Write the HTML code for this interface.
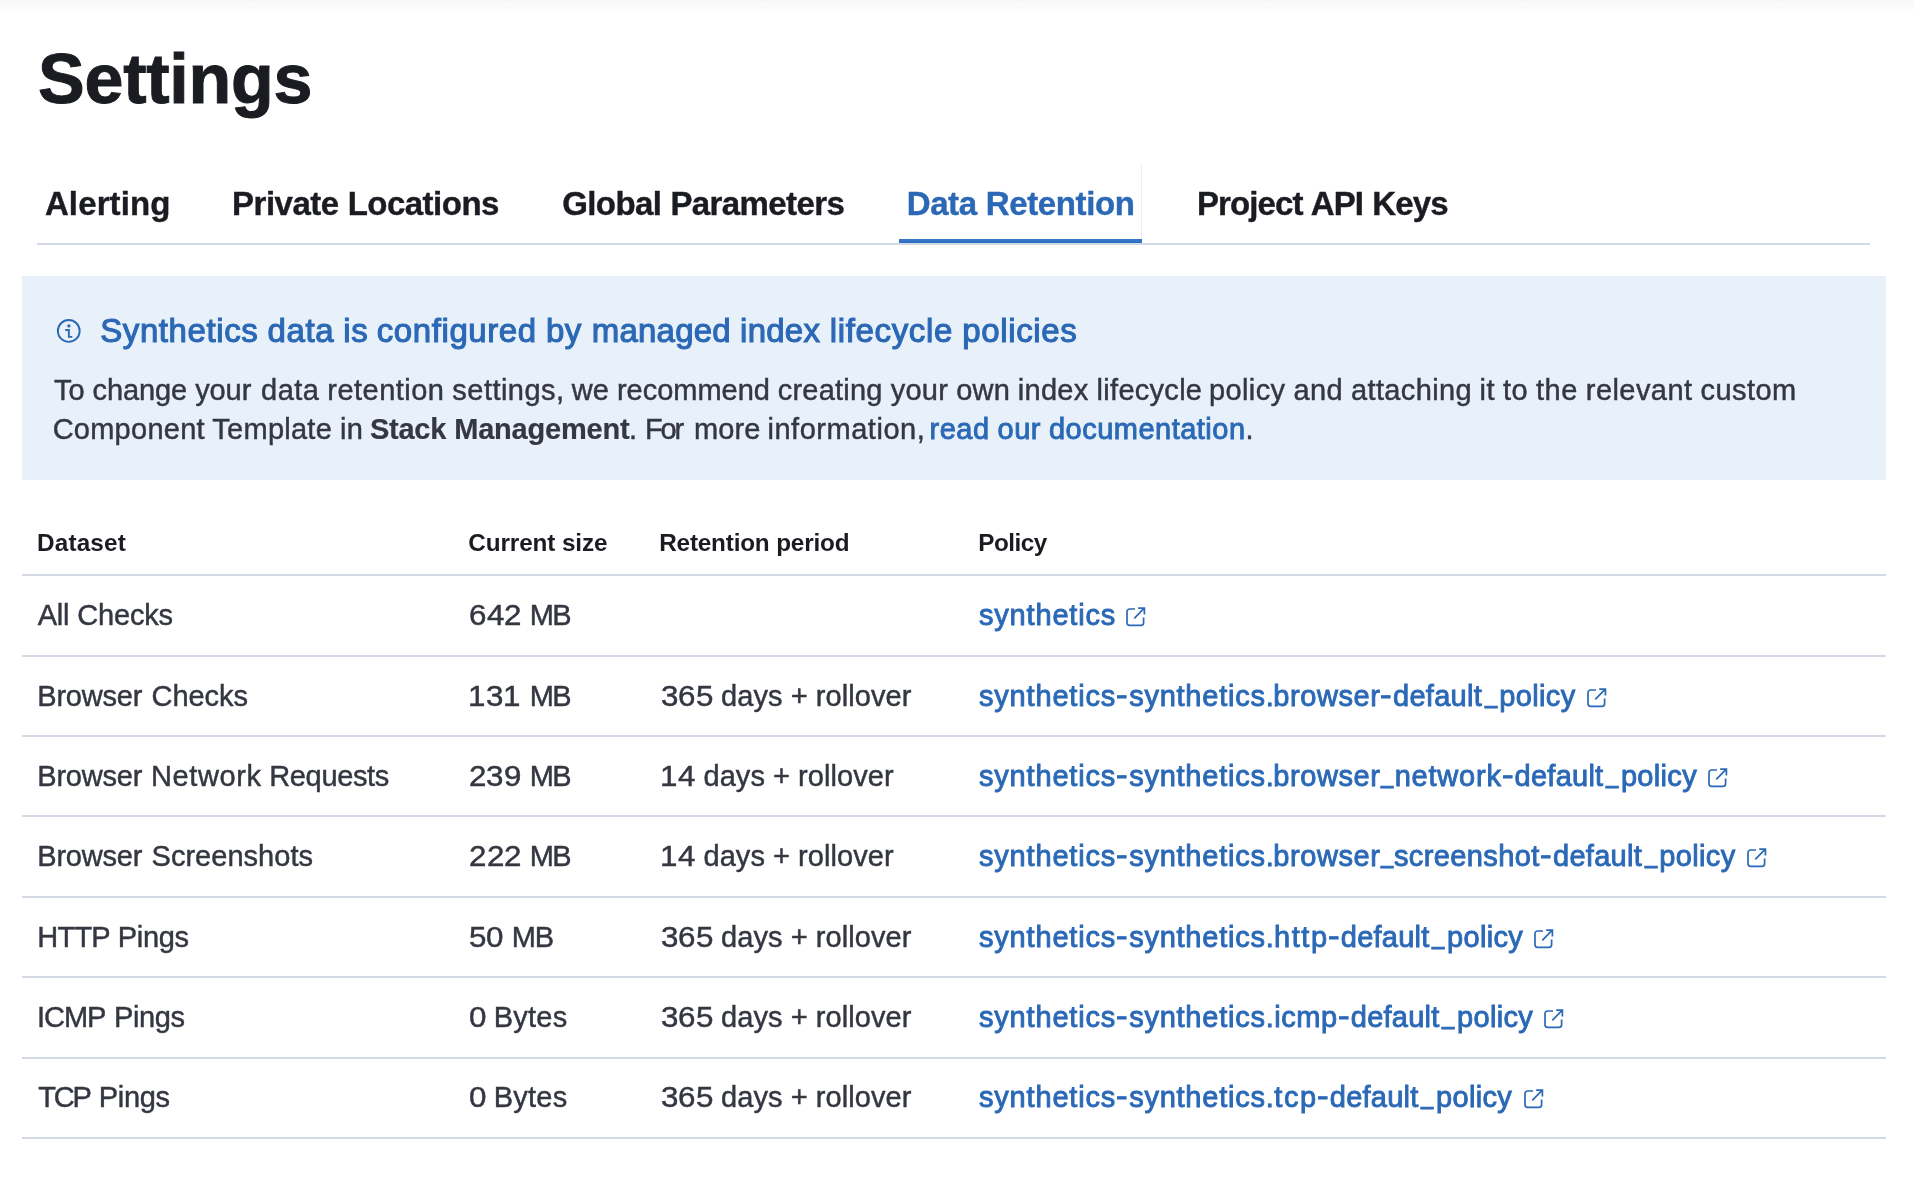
<!DOCTYPE html>
<html lang="en"><head><meta charset="utf-8"><title>Settings - Data Retention</title><style>
html,body{margin:0;padding:0;background:#fff;}
body{width:1914px;height:1178px;overflow:hidden;position:relative;font-family:"Liberation Sans",Arial,sans-serif;}
.p{position:absolute;left:0;top:0;width:1914px;height:1178px;overflow:hidden;will-change:transform;}
.t{position:absolute;display:block;white-space:pre;line-height:1;margin:0;padding:0;text-decoration:none;font-style:normal;}
.k{display:inline-block;position:relative;width:0;overflow:visible;white-space:pre;transform-origin:0 0;}
.b{position:absolute;}
svg{position:absolute;overflow:visible;}
</style></head><body><div class="p">
<div class="b" style="left:0;top:0;width:1914px;height:13px;background:linear-gradient(#f4f4f4 0,#f9f9f9 18%,#fbfbfb 55%,#fff 100%)"></div>
<div class="b" style="left:37px;top:243px;width:1833px;height:2px;background:#d3dae6"></div>
<div class="b" style="left:899px;top:239px;width:243px;height:4px;background:#3476c6"></div><div class="b" style="left:899px;top:242px;width:243px;height:1px;background:#266cc4"></div>
<div class="b" style="left:1141px;top:165px;width:1px;height:74px;background:#e8eff9"></div>
<div class="b" style="left:22px;top:276px;width:1864px;height:204px;background:#e8f0fa"></div>
<svg style="left:55px;top:317px" width="28" height="28" viewBox="0 0 28 28"><circle cx="13.75" cy="13.95" r="10.9" fill="none" stroke="#2b68b5" stroke-width="1.9"/><circle cx="13.9" cy="8.9" r="1.65" fill="#2b68b5"/><path d="M10.2 13.05H13.85V19.9H17.3" fill="none" stroke="#2b68b5" stroke-width="1.9"/></svg>
<div class="b" style="left:22px;top:574px;width:1864px;height:2px;background:#d3dae6"></div>
<div class="b" style="left:22px;top:655px;width:1864px;height:2px;background:#d3dae6"></div>
<div class="b" style="left:22px;top:735px;width:1864px;height:2px;background:#d3dae6"></div>
<div class="b" style="left:22px;top:815px;width:1864px;height:2px;background:#d3dae6"></div>
<div class="b" style="left:22px;top:896px;width:1864px;height:2px;background:#d3dae6"></div>
<div class="b" style="left:22px;top:976px;width:1864px;height:2px;background:#d3dae6"></div>
<div class="b" style="left:22px;top:1057px;width:1864px;height:2px;background:#d3dae6"></div>
<div class="b" style="left:22px;top:1137px;width:1864px;height:2px;background:#d3dae6"></div>
<h1 class="t" style="left:38.05px;top:44px;font-size:70px;font-weight:700;color:#1a1c21"><span class="k" style="letter-spacing:-0.252px;-webkit-text-stroke:1.0px #1a1c21;">Settings</span></h1>
<span class="t" style="left:44.93px;top:187px;font-size:33px;font-weight:700;color:#1a1c21"><span class="k" style="letter-spacing:0.121px;-webkit-text-stroke:0.4px #1a1c21;">Alerting</span></span>
<span class="t" style="left:232.10px;top:187px;font-size:33px;font-weight:700;color:#1a1c21"><span class="k" style="letter-spacing:-0.521px;word-spacing:0.521px;-webkit-text-stroke:0.4px #1a1c21;">Private Locations</span></span>
<span class="t" style="left:562.22px;top:187px;font-size:33px;font-weight:700;color:#1a1c21"><span class="k" style="letter-spacing:-0.605px;word-spacing:0.605px;-webkit-text-stroke:0.4px #1a1c21;">Global Parameters</span></span>
<span class="t" style="left:906.70px;top:187px;font-size:33px;font-weight:700;color:#2b68b5"><span class="k" style="letter-spacing:-0.393px;word-spacing:0.393px;-webkit-text-stroke:0.4px #2b68b5;">Data Retention</span></span>
<span class="t" style="left:1196.88px;top:187px;font-size:33px;font-weight:700;color:#1a1c21"><span class="k" style="letter-spacing:-0.861px;word-spacing:0.861px;-webkit-text-stroke:0.4px #1a1c21;">Project API Keys</span></span>
<p class="t" style="left:100.19px;top:314px;font-size:33px;font-weight:400;color:#2b68b5"><span class="k" style="letter-spacing:0.595px;word-spacing:-0.595px;-webkit-text-stroke:1.1px #2b68b5;">Synthetics data is </span><span class="k" style="left:276.60px;letter-spacing:0.586px;word-spacing:-0.586px;-webkit-text-stroke:1.1px #2b68b5;">configured by </span><span class="k" style="left:491.50px;letter-spacing:0.232px;word-spacing:-0.232px;-webkit-text-stroke:1.1px #2b68b5;">managed index </span><span class="k" style="left:729.55px;letter-spacing:0.653px;word-spacing:-0.653px;-webkit-text-stroke:1.1px #2b68b5;">lifecycle policies</span></p>
<p class="t" style="left:54.01px;top:376px;font-size:29px;font-weight:400;color:#343741"><span class="k" style="letter-spacing:-0.090px;word-spacing:0.090px;-webkit-text-stroke:0.45px #343741;">To change your </span><span class="k" style="left:207.05px;letter-spacing:0.455px;word-spacing:-0.455px;-webkit-text-stroke:0.45px #343741;">data retention settings, </span><span class="k" style="left:517.85px;letter-spacing:-0.010px;word-spacing:0.010px;-webkit-text-stroke:0.45px #343741;">we recommend </span><span class="k" style="left:723.65px;letter-spacing:0.236px;word-spacing:-0.236px;-webkit-text-stroke:0.45px #343741;">creating your own </span><span class="k" style="left:963.79px;letter-spacing:0.284px;word-spacing:-0.284px;-webkit-text-stroke:0.45px #343741;">index lifecycle </span><span class="k" style="left:1155.01px;letter-spacing:0.373px;word-spacing:-0.373px;-webkit-text-stroke:0.45px #343741;">policy and attaching </span><span class="k" style="left:1425.51px;letter-spacing:0.444px;word-spacing:-0.444px;-webkit-text-stroke:0.45px #343741;">it to the relevant custom</span></p>
<p class="t" style="left:52.65px;top:415px;font-size:29px;font-weight:400;color:#343741"><span class="k" style="letter-spacing:0.250px;word-spacing:-0.250px;-webkit-text-stroke:0.45px #343741;">Component Template in </span><b class="k" style="left:317.25px;font-weight:700;letter-spacing:-0.218px;word-spacing:0.218px;-webkit-text-stroke:0.2px #343741;">Stack Management</b><span class="k" style="left:576.34px;letter-spacing:0.000px;-webkit-text-stroke:0.45px #343741;">. </span><span class="k" style="left:592.43px;letter-spacing:-2.196px;-webkit-text-stroke:0.45px #343741;">For </span><span class="k" style="left:641.39px;letter-spacing:0.119px;-webkit-text-stroke:0.45px #343741;">more </span><span class="k" style="left:714.79px;letter-spacing:0.530px;-webkit-text-stroke:0.45px #343741;">information, </span><span class="k" style="left:876.91px;color:#2b69b6;letter-spacing:0.483px;word-spacing:-0.483px;-webkit-text-stroke:0.9px #2b69b6;">read our documentation</span><span class="k" style="left:1192.97px;letter-spacing:0.000px;-webkit-text-stroke:0.45px #343741;">.</span></p>
<div class="t" style="left:37.03px;top:531px;font-size:24.3px;font-weight:700;color:#1a1c21"><span class="k" style="letter-spacing:0.165px;">Dataset</span></div>
<div class="t" style="left:468.36px;top:531px;font-size:24.3px;font-weight:700;color:#1a1c21"><span class="k" style="letter-spacing:-0.128px;word-spacing:0.128px;">Current size</span></div>
<div class="t" style="left:659.23px;top:531px;font-size:24.3px;font-weight:700;color:#1a1c21"><span class="k" style="letter-spacing:-0.198px;word-spacing:0.198px;">Retention period</span></div>
<div class="t" style="left:978.21px;top:531px;font-size:24.3px;font-weight:700;color:#1a1c21"><span class="k" style="letter-spacing:-0.503px;">Policy</span></div>
<div class="t" style="left:37.69px;top:601px;font-size:29px;font-weight:400;color:#343741"><span class="k" style="letter-spacing:-0.204px;word-spacing:0.204px;-webkit-text-stroke:0.45px #343741;">All Checks</span></div>
<div class="t" style="left:469.18px;top:601px;font-size:29px;font-weight:400;color:#343741"><span class="k" style="left:-0.00px;letter-spacing:0.000px;transform:translateY(0px) scaleX(1.08);-webkit-text-stroke:0.45px #343741;">6</span><span class="k" style="left:17.50px;letter-spacing:0.000px;transform:translateY(0px) scaleX(1.08);-webkit-text-stroke:0.45px #343741;">4</span><span class="k" style="left:34.58px;letter-spacing:0.000px;transform:translateY(0px) scaleX(1.08);-webkit-text-stroke:0.45px #343741;">2 </span><span class="k" style="left:60.65px;letter-spacing:-1.727px;-webkit-text-stroke:0.45px #343741;">MB</span></div>
<a class="t" style="left:978.97px;top:601px;font-size:29px;font-weight:400;color:#2b69b6"><span class="k" style="letter-spacing:0.823px;-webkit-text-stroke:0.9px #2b69b6;">synthetics</span></a>
<div class="t" style="left:37.25px;top:682px;font-size:29px;font-weight:400;color:#343741"><span class="k" style="letter-spacing:-0.192px;-webkit-text-stroke:0.45px #343741;">Browser </span><span class="k" style="left:114.27px;letter-spacing:-0.039px;-webkit-text-stroke:0.45px #343741;">Checks</span></div>
<div class="t" style="left:467.50px;top:682px;font-size:29px;font-weight:400;color:#343741"><span class="k" style="left:-0.00px;letter-spacing:0.000px;transform:translateY(0px) scaleX(1.08);-webkit-text-stroke:0.45px #343741;">1</span><span class="k" style="left:18.52px;letter-spacing:0.000px;transform:translateY(0px) scaleX(1.08);-webkit-text-stroke:0.45px #343741;">3</span><span class="k" style="left:35.19px;letter-spacing:0.000px;transform:translateY(0px) scaleX(1.08);-webkit-text-stroke:0.45px #343741;">1 </span><span class="k" style="left:62.33px;letter-spacing:-1.727px;-webkit-text-stroke:0.45px #343741;">MB</span></div>
<div class="t" style="left:661.08px;top:682px;font-size:29px;font-weight:400;color:#343741"><span class="k" style="left:-0.00px;letter-spacing:0.000px;transform:translateY(0px) scaleX(1.08);-webkit-text-stroke:0.45px #343741;">3</span><span class="k" style="left:17.00px;letter-spacing:0.000px;transform:translateY(0px) scaleX(1.08);-webkit-text-stroke:0.45px #343741;">6</span><span class="k" style="left:35.14px;letter-spacing:0.000px;transform:translateY(0px) scaleX(1.08);-webkit-text-stroke:0.45px #343741;">5 </span><span class="k" style="left:60.00px;letter-spacing:0.077px;word-spacing:-0.077px;-webkit-text-stroke:0.45px #343741;">days + rollover</span></div>
<a class="t" style="left:978.97px;top:682px;font-size:29px;font-weight:400;color:#2b69b6"><span class="k" style="letter-spacing:0.823px;-webkit-text-stroke:0.9px #2b69b6;">synthetics</span><span class="k" style="left:136.99px;letter-spacing:0.000px;transform:translateY(-1.5px) scaleX(1.2);-webkit-text-stroke:0.9px #2b69b6;">-</span><span class="k" style="left:150.20px;letter-spacing:0.756px;-webkit-text-stroke:0.9px #2b69b6;">synthetics.</span><span class="k" style="left:294.21px;letter-spacing:0.603px;-webkit-text-stroke:0.9px #2b69b6;">browser</span><span class="k" style="left:401.36px;letter-spacing:0.000px;transform:translateY(-1.5px) scaleX(1.2);-webkit-text-stroke:0.9px #2b69b6;">-</span><span class="k" style="left:414.08px;letter-spacing:0.280px;-webkit-text-stroke:0.9px #2b69b6;">default</span><span class="k" style="left:505.68px;letter-spacing:0.000px;transform:translateY(-3.6px) scaleX(0.76);-webkit-text-stroke:0.8px #2b69b6;">_</span><span class="k" style="left:520.29px;letter-spacing:0.357px;-webkit-text-stroke:0.9px #2b69b6;">policy</span></a>
<div class="t" style="left:37.25px;top:762px;font-size:29px;font-weight:400;color:#343741"><span class="k" style="letter-spacing:-0.192px;-webkit-text-stroke:0.45px #343741;">Browser </span><span class="k" style="left:113.83px;letter-spacing:0.577px;-webkit-text-stroke:0.45px #343741;">Network </span><span class="k" style="left:232.01px;letter-spacing:-0.351px;-webkit-text-stroke:0.45px #343741;">Requests</span></div>
<div class="t" style="left:468.56px;top:762px;font-size:29px;font-weight:400;color:#343741"><span class="k" style="left:-0.00px;letter-spacing:0.000px;transform:translateY(0px) scaleX(1.08);-webkit-text-stroke:0.45px #343741;">2</span><span class="k" style="left:17.46px;letter-spacing:0.000px;transform:translateY(0px) scaleX(1.08);-webkit-text-stroke:0.45px #343741;">3</span><span class="k" style="left:35.21px;letter-spacing:0.000px;transform:translateY(0px) scaleX(1.08);-webkit-text-stroke:0.45px #343741;">9 </span><span class="k" style="left:61.27px;letter-spacing:-1.727px;-webkit-text-stroke:0.45px #343741;">MB</span></div>
<div class="t" style="left:659.61px;top:762px;font-size:29px;font-weight:400;color:#343741"><span class="k" style="left:0.00px;letter-spacing:0.000px;transform:translateY(0px) scaleX(1.08);-webkit-text-stroke:0.45px #343741;">1</span><span class="k" style="left:18.68px;letter-spacing:0.000px;transform:translateY(0px) scaleX(1.08);-webkit-text-stroke:0.45px #343741;">4 </span><span class="k" style="left:43.84px;letter-spacing:0.073px;word-spacing:-0.073px;-webkit-text-stroke:0.45px #343741;">days + rollover</span></div>
<a class="t" style="left:978.97px;top:762px;font-size:29px;font-weight:400;color:#2b69b6"><span class="k" style="letter-spacing:0.823px;-webkit-text-stroke:0.9px #2b69b6;">synthetics</span><span class="k" style="left:136.99px;letter-spacing:0.000px;transform:translateY(-1.5px) scaleX(1.2);-webkit-text-stroke:0.9px #2b69b6;">-</span><span class="k" style="left:150.20px;letter-spacing:0.756px;-webkit-text-stroke:0.9px #2b69b6;">synthetics.</span><span class="k" style="left:294.21px;letter-spacing:0.603px;-webkit-text-stroke:0.9px #2b69b6;">browser</span><span class="k" style="left:402.03px;letter-spacing:0.000px;transform:translateY(-3.6px) scaleX(0.76);-webkit-text-stroke:0.8px #2b69b6;">_</span><span class="k" style="left:415.71px;letter-spacing:0.787px;-webkit-text-stroke:0.9px #2b69b6;">network</span><span class="k" style="left:523.04px;letter-spacing:0.000px;transform:translateY(-1.5px) scaleX(1.2);-webkit-text-stroke:0.9px #2b69b6;">-</span><span class="k" style="left:535.59px;letter-spacing:0.256px;-webkit-text-stroke:0.9px #2b69b6;">default</span><span class="k" style="left:626.83px;letter-spacing:0.000px;transform:translateY(-3.6px) scaleX(0.76);-webkit-text-stroke:0.8px #2b69b6;">_</span><span class="k" style="left:641.94px;letter-spacing:0.319px;-webkit-text-stroke:0.9px #2b69b6;">policy</span></a>
<div class="t" style="left:37.25px;top:842px;font-size:29px;font-weight:400;color:#343741"><span class="k" style="letter-spacing:-0.192px;-webkit-text-stroke:0.45px #343741;">Browser </span><span class="k" style="left:114.28px;letter-spacing:0.029px;-webkit-text-stroke:0.45px #343741;">Screenshots</span></div>
<div class="t" style="left:468.56px;top:842px;font-size:29px;font-weight:400;color:#343741"><span class="k" style="left:-0.00px;letter-spacing:0.000px;transform:translateY(0px) scaleX(1.08);-webkit-text-stroke:0.45px #343741;">2</span><span class="k" style="left:18.09px;letter-spacing:0.000px;transform:translateY(0px) scaleX(1.08);-webkit-text-stroke:0.45px #343741;">2</span><span class="k" style="left:35.20px;letter-spacing:0.000px;transform:translateY(0px) scaleX(1.08);-webkit-text-stroke:0.45px #343741;">2 </span><span class="k" style="left:61.27px;letter-spacing:-1.727px;-webkit-text-stroke:0.45px #343741;">MB</span></div>
<div class="t" style="left:659.61px;top:842px;font-size:29px;font-weight:400;color:#343741"><span class="k" style="left:0.00px;letter-spacing:0.000px;transform:translateY(0px) scaleX(1.08);-webkit-text-stroke:0.45px #343741;">1</span><span class="k" style="left:18.68px;letter-spacing:0.000px;transform:translateY(0px) scaleX(1.08);-webkit-text-stroke:0.45px #343741;">4 </span><span class="k" style="left:43.84px;letter-spacing:0.073px;word-spacing:-0.073px;-webkit-text-stroke:0.45px #343741;">days + rollover</span></div>
<a class="t" style="left:978.97px;top:842px;font-size:29px;font-weight:400;color:#2b69b6"><span class="k" style="letter-spacing:0.823px;-webkit-text-stroke:0.9px #2b69b6;">synthetics</span><span class="k" style="left:136.99px;letter-spacing:0.000px;transform:translateY(-1.5px) scaleX(1.2);-webkit-text-stroke:0.9px #2b69b6;">-</span><span class="k" style="left:150.20px;letter-spacing:0.756px;-webkit-text-stroke:0.9px #2b69b6;">synthetics.</span><span class="k" style="left:294.21px;letter-spacing:0.603px;-webkit-text-stroke:0.9px #2b69b6;">browser</span><span class="k" style="left:402.03px;letter-spacing:0.000px;transform:translateY(-3.6px) scaleX(0.76);-webkit-text-stroke:0.8px #2b69b6;">_</span><span class="k" style="left:415.00px;letter-spacing:0.393px;-webkit-text-stroke:0.9px #2b69b6;">screenshot</span><span class="k" style="left:561.36px;letter-spacing:0.000px;transform:translateY(-1.5px) scaleX(1.2);-webkit-text-stroke:0.9px #2b69b6;">-</span><span class="k" style="left:574.08px;letter-spacing:0.280px;-webkit-text-stroke:0.9px #2b69b6;">default</span><span class="k" style="left:665.68px;letter-spacing:0.000px;transform:translateY(-3.6px) scaleX(0.76);-webkit-text-stroke:0.8px #2b69b6;">_</span><span class="k" style="left:680.29px;letter-spacing:0.357px;-webkit-text-stroke:0.9px #2b69b6;">policy</span></a>
<div class="t" style="left:37.25px;top:923px;font-size:29px;font-weight:400;color:#343741"><span class="k" style="letter-spacing:-0.756px;-webkit-text-stroke:0.45px #343741;">HTTP </span><span class="k" style="left:80.52px;letter-spacing:-0.316px;-webkit-text-stroke:0.45px #343741;">Pings</span></div>
<div class="t" style="left:469.27px;top:923px;font-size:29px;font-weight:400;color:#343741"><span class="k" style="left:0.00px;letter-spacing:0.000px;transform:translateY(0px) scaleX(1.08);-webkit-text-stroke:0.45px #343741;">5</span><span class="k" style="left:17.17px;letter-spacing:0.000px;transform:translateY(0px) scaleX(1.08);-webkit-text-stroke:0.45px #343741;">0 </span><span class="k" style="left:42.56px;letter-spacing:-1.227px;-webkit-text-stroke:0.45px #343741;">MB</span></div>
<div class="t" style="left:661.08px;top:923px;font-size:29px;font-weight:400;color:#343741"><span class="k" style="left:-0.00px;letter-spacing:0.000px;transform:translateY(0px) scaleX(1.08);-webkit-text-stroke:0.45px #343741;">3</span><span class="k" style="left:17.00px;letter-spacing:0.000px;transform:translateY(0px) scaleX(1.08);-webkit-text-stroke:0.45px #343741;">6</span><span class="k" style="left:35.14px;letter-spacing:0.000px;transform:translateY(0px) scaleX(1.08);-webkit-text-stroke:0.45px #343741;">5 </span><span class="k" style="left:60.00px;letter-spacing:0.077px;word-spacing:-0.077px;-webkit-text-stroke:0.45px #343741;">days + rollover</span></div>
<a class="t" style="left:978.97px;top:923px;font-size:29px;font-weight:400;color:#2b69b6"><span class="k" style="letter-spacing:0.823px;-webkit-text-stroke:0.9px #2b69b6;">synthetics</span><span class="k" style="left:136.99px;letter-spacing:0.000px;transform:translateY(-1.5px) scaleX(1.2);-webkit-text-stroke:0.9px #2b69b6;">-</span><span class="k" style="left:150.20px;letter-spacing:0.756px;-webkit-text-stroke:0.9px #2b69b6;">synthetics.</span><span class="k" style="left:294.97px;letter-spacing:1.595px;-webkit-text-stroke:0.9px #2b69b6;">http</span><span class="k" style="left:348.56px;letter-spacing:0.000px;transform:translateY(-1.5px) scaleX(1.2);-webkit-text-stroke:0.9px #2b69b6;">-</span><span class="k" style="left:361.79px;letter-spacing:0.247px;-webkit-text-stroke:0.9px #2b69b6;">default</span><span class="k" style="left:452.63px;letter-spacing:0.000px;transform:translateY(-3.6px) scaleX(0.76);-webkit-text-stroke:0.8px #2b69b6;">_</span><span class="k" style="left:468.10px;letter-spacing:0.322px;-webkit-text-stroke:0.9px #2b69b6;">policy</span></a>
<div class="t" style="left:36.92px;top:1003px;font-size:29px;font-weight:400;color:#343741"><span class="k" style="letter-spacing:-0.985px;-webkit-text-stroke:0.45px #343741;">ICMP </span><span class="k" style="left:77.16px;letter-spacing:-0.425px;-webkit-text-stroke:0.45px #343741;">Pings</span></div>
<div class="t" style="left:469.09px;top:1003px;font-size:29px;font-weight:400;color:#343741"><span class="k" style="left:0.00px;letter-spacing:0.000px;transform:translateY(0px) scaleX(1.08);-webkit-text-stroke:0.45px #343741;">0 </span><span class="k" style="left:24.74px;letter-spacing:0.198px;-webkit-text-stroke:0.45px #343741;">Bytes</span></div>
<div class="t" style="left:661.08px;top:1003px;font-size:29px;font-weight:400;color:#343741"><span class="k" style="left:-0.00px;letter-spacing:0.000px;transform:translateY(0px) scaleX(1.08);-webkit-text-stroke:0.45px #343741;">3</span><span class="k" style="left:17.00px;letter-spacing:0.000px;transform:translateY(0px) scaleX(1.08);-webkit-text-stroke:0.45px #343741;">6</span><span class="k" style="left:35.14px;letter-spacing:0.000px;transform:translateY(0px) scaleX(1.08);-webkit-text-stroke:0.45px #343741;">5 </span><span class="k" style="left:60.00px;letter-spacing:0.077px;word-spacing:-0.077px;-webkit-text-stroke:0.45px #343741;">days + rollover</span></div>
<a class="t" style="left:978.97px;top:1003px;font-size:29px;font-weight:400;color:#2b69b6"><span class="k" style="letter-spacing:0.823px;-webkit-text-stroke:0.9px #2b69b6;">synthetics</span><span class="k" style="left:136.99px;letter-spacing:0.000px;transform:translateY(-1.5px) scaleX(1.2);-webkit-text-stroke:0.9px #2b69b6;">-</span><span class="k" style="left:150.20px;letter-spacing:0.756px;-webkit-text-stroke:0.9px #2b69b6;">synthetics.</span><span class="k" style="left:295.28px;letter-spacing:0.564px;-webkit-text-stroke:0.9px #2b69b6;">icmp</span><span class="k" style="left:358.56px;letter-spacing:0.000px;transform:translateY(-1.5px) scaleX(1.2);-webkit-text-stroke:0.9px #2b69b6;">-</span><span class="k" style="left:371.79px;letter-spacing:0.247px;-webkit-text-stroke:0.9px #2b69b6;">default</span><span class="k" style="left:462.63px;letter-spacing:0.000px;transform:translateY(-3.6px) scaleX(0.76);-webkit-text-stroke:0.8px #2b69b6;">_</span><span class="k" style="left:478.10px;letter-spacing:0.322px;-webkit-text-stroke:0.9px #2b69b6;">policy</span></a>
<div class="t" style="left:38.25px;top:1083px;font-size:29px;font-weight:400;color:#343741"><span class="k" style="letter-spacing:-2.265px;-webkit-text-stroke:0.45px #343741;">TCP </span><span class="k" style="left:60.52px;letter-spacing:-0.316px;-webkit-text-stroke:0.45px #343741;">Pings</span></div>
<div class="t" style="left:469.09px;top:1083px;font-size:29px;font-weight:400;color:#343741"><span class="k" style="left:0.00px;letter-spacing:0.000px;transform:translateY(0px) scaleX(1.08);-webkit-text-stroke:0.45px #343741;">0 </span><span class="k" style="left:24.74px;letter-spacing:0.198px;-webkit-text-stroke:0.45px #343741;">Bytes</span></div>
<div class="t" style="left:661.08px;top:1083px;font-size:29px;font-weight:400;color:#343741"><span class="k" style="left:-0.00px;letter-spacing:0.000px;transform:translateY(0px) scaleX(1.08);-webkit-text-stroke:0.45px #343741;">3</span><span class="k" style="left:17.00px;letter-spacing:0.000px;transform:translateY(0px) scaleX(1.08);-webkit-text-stroke:0.45px #343741;">6</span><span class="k" style="left:35.14px;letter-spacing:0.000px;transform:translateY(0px) scaleX(1.08);-webkit-text-stroke:0.45px #343741;">5 </span><span class="k" style="left:60.00px;letter-spacing:0.077px;word-spacing:-0.077px;-webkit-text-stroke:0.45px #343741;">days + rollover</span></div>
<a class="t" style="left:978.97px;top:1083px;font-size:29px;font-weight:400;color:#2b69b6"><span class="k" style="letter-spacing:0.823px;-webkit-text-stroke:0.9px #2b69b6;">synthetics</span><span class="k" style="left:136.99px;letter-spacing:0.000px;transform:translateY(-1.5px) scaleX(1.2);-webkit-text-stroke:0.9px #2b69b6;">-</span><span class="k" style="left:150.20px;letter-spacing:0.756px;-webkit-text-stroke:0.9px #2b69b6;">synthetics.</span><span class="k" style="left:295.28px;letter-spacing:1.646px;-webkit-text-stroke:0.9px #2b69b6;">tcp</span><span class="k" style="left:337.76px;letter-spacing:0.000px;transform:translateY(-1.5px) scaleX(1.2);-webkit-text-stroke:0.9px #2b69b6;">-</span><span class="k" style="left:350.81px;letter-spacing:0.243px;-webkit-text-stroke:0.9px #2b69b6;">default</span><span class="k" style="left:441.73px;letter-spacing:0.000px;transform:translateY(-3.6px) scaleX(0.76);-webkit-text-stroke:0.8px #2b69b6;">_</span><span class="k" style="left:457.01px;letter-spacing:0.350px;-webkit-text-stroke:0.9px #2b69b6;">policy</span></a>
<svg style="left:1126.3px;top:606px" width="21" height="21" viewBox="0 0 21 21"><path d="M9 3H3.6a2.6 2.6 0 0 0-2.6 2.6v11.2a2.6 2.6 0 0 0 2.6 2.6h11.4a2.6 2.6 0 0 0 2.6-2.6V11.4" fill="none" stroke="#2b69b6" stroke-width="1.7"/><path d="M8.3 12.4L18 2.4M12.2 2.1h6.2v6.4" fill="none" stroke="#2b69b6" stroke-width="1.7"/></svg>
<svg style="left:1586.8px;top:687px" width="21" height="21" viewBox="0 0 21 21"><path d="M9 3H3.6a2.6 2.6 0 0 0-2.6 2.6v11.2a2.6 2.6 0 0 0 2.6 2.6h11.4a2.6 2.6 0 0 0 2.6-2.6V11.4" fill="none" stroke="#2b69b6" stroke-width="1.7"/><path d="M8.3 12.4L18 2.4M12.2 2.1h6.2v6.4" fill="none" stroke="#2b69b6" stroke-width="1.7"/></svg>
<svg style="left:1708.3px;top:767px" width="21" height="21" viewBox="0 0 21 21"><path d="M9 3H3.6a2.6 2.6 0 0 0-2.6 2.6v11.2a2.6 2.6 0 0 0 2.6 2.6h11.4a2.6 2.6 0 0 0 2.6-2.6V11.4" fill="none" stroke="#2b69b6" stroke-width="1.7"/><path d="M8.3 12.4L18 2.4M12.2 2.1h6.2v6.4" fill="none" stroke="#2b69b6" stroke-width="1.7"/></svg>
<svg style="left:1746.8px;top:847px" width="21" height="21" viewBox="0 0 21 21"><path d="M9 3H3.6a2.6 2.6 0 0 0-2.6 2.6v11.2a2.6 2.6 0 0 0 2.6 2.6h11.4a2.6 2.6 0 0 0 2.6-2.6V11.4" fill="none" stroke="#2b69b6" stroke-width="1.7"/><path d="M8.3 12.4L18 2.4M12.2 2.1h6.2v6.4" fill="none" stroke="#2b69b6" stroke-width="1.7"/></svg>
<svg style="left:1534.4px;top:928px" width="21" height="21" viewBox="0 0 21 21"><path d="M9 3H3.6a2.6 2.6 0 0 0-2.6 2.6v11.2a2.6 2.6 0 0 0 2.6 2.6h11.4a2.6 2.6 0 0 0 2.6-2.6V11.4" fill="none" stroke="#2b69b6" stroke-width="1.7"/><path d="M8.3 12.4L18 2.4M12.2 2.1h6.2v6.4" fill="none" stroke="#2b69b6" stroke-width="1.7"/></svg>
<svg style="left:1544.4px;top:1008px" width="21" height="21" viewBox="0 0 21 21"><path d="M9 3H3.6a2.6 2.6 0 0 0-2.6 2.6v11.2a2.6 2.6 0 0 0 2.6 2.6h11.4a2.6 2.6 0 0 0 2.6-2.6V11.4" fill="none" stroke="#2b69b6" stroke-width="1.7"/><path d="M8.3 12.4L18 2.4M12.2 2.1h6.2v6.4" fill="none" stroke="#2b69b6" stroke-width="1.7"/></svg>
<svg style="left:1523.5px;top:1088px" width="21" height="21" viewBox="0 0 21 21"><path d="M9 3H3.6a2.6 2.6 0 0 0-2.6 2.6v11.2a2.6 2.6 0 0 0 2.6 2.6h11.4a2.6 2.6 0 0 0 2.6-2.6V11.4" fill="none" stroke="#2b69b6" stroke-width="1.7"/><path d="M8.3 12.4L18 2.4M12.2 2.1h6.2v6.4" fill="none" stroke="#2b69b6" stroke-width="1.7"/></svg>
</div></body></html>
